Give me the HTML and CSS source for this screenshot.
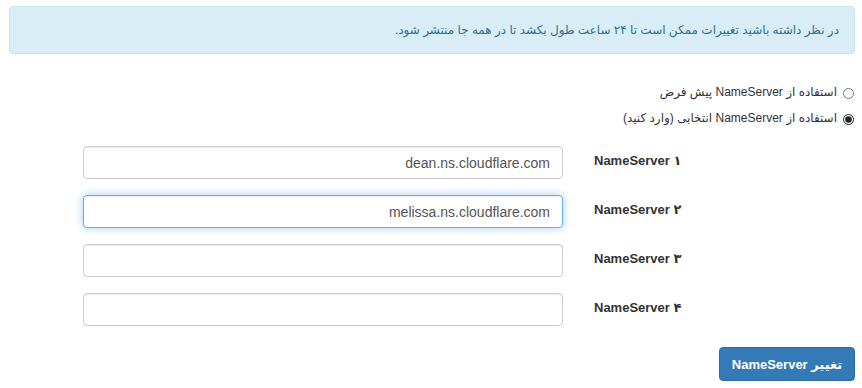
FILE: index.html
```html
<!DOCTYPE html>
<html lang="fa" dir="rtl">
  <head>
    <meta charset="UTF-8" />
    <title>تغییر NameServer</title>
    <link rel="stylesheet" href="styles.css">
  </head>
  <body>
    <div class="container">
      <div class="alert-info">در نظر داشته باشید تغییرات ممکن است تا ۲۴ ساعت طول بکشد تا در همه جا منتشر شود.</div>

      <form id="nsForm">
        <div class="radio-group">
          <label class="radio"><input type="radio" name="nsType" value="default" /> استفاده از NameServer پیش فرض</label>
          <label class="radio"><input type="radio" name="nsType" value="custom" checked /> استفاده از NameServer انتخابی (وارد کنید)</label>
        </div>

        <div class="ns-row">
          <label class="ns-label" for="ns1">NameServer ۱</label>
          <input type="text" id="ns1" class="ns-input" value="dean.ns.cloudflare.com" />
        </div>
        <div class="ns-row">
          <label class="ns-label" for="ns2">NameServer ۲</label>
          <input type="text" id="ns2" class="ns-input focused" value="melissa.ns.cloudflare.com" />
        </div>
        <div class="ns-row">
          <label class="ns-label" for="ns3">NameServer ۳</label>
          <input type="text" id="ns3" class="ns-input" value="" />
        </div>
        <div class="ns-row">
          <label class="ns-label" for="ns4">NameServer ۴</label>
          <input type="text" id="ns4" class="ns-input" value="" />
        </div>

        <div class="actions">
          <button type="submit" class="btn-primary">تغییر NameServer</button>
        </div>
      </form>
    </div>
  </body>
</html>
```

FILE: styles.css
```css
body {
  font-family: "Liberation Sans", "DejaVu Sans", sans-serif;
  font-size: 13px;
  color: #333;
  background: #fff;
  margin: 0;
}

.container {
  margin: 6px 7px 0 9px;
}

.alert-info {
  background: #d9edf7;
  border: 1px solid #c6e4f0;
  border-radius: 4px;
  color: #31708f;
  padding: 14px 15px;
  line-height: 18px;
  font-size: 12px;
}

.radio-group {
  margin-top: 25px;
  padding-right: 1px;
}

.radio {
  display: flex;
  align-items: center;
  gap: 6px;
  height: 26px;
  font-size: 12px;
}

.radio input {
  margin: 2px 0 0 0;
  width: 11px;
  height: 11px;
  accent-color: #222;
}

.ns-row {
  display: flex;
  align-items: flex-start;
  margin-top: 16px;
}

.radio-group + .ns-row {
  margin-top: 15px;
}

.ns-label {
  width: 261px;
  padding: 7px 0 0 14px;
  text-align: left;
  font-weight: bold;
  color: #333;
}

.ns-input {
  width: 480px;
  height: 33px;
  box-sizing: border-box;
  margin-right: 17px;
  padding: 6px 12px;
  border: 1px solid #ccc;
  border-radius: 4px;
  font-family: "Liberation Sans", sans-serif;
  font-size: 14px;
  color: #555;
  direction: rtl;
  box-shadow: inset 0 1px 1px rgba(0, 0, 0, 0.075);
}

.ns-input.focused,
.ns-input:focus {
  outline: none;
  border-color: #66afe9;
  box-shadow: inset 0 1px 1px rgba(0, 0, 0, 0.075), 0 0 8px rgba(102, 175, 233, 0.6);
}

.actions {
  margin-top: 21px;
}

.btn-primary {
  font-family: "Liberation Sans", "DejaVu Sans", sans-serif;
  font-size: 13px;
  font-weight: bold;
  color: #fff;
  background: #337ab7;
  border: 1px solid #2e6da4;
  border-radius: 4px;
  width: 136px;
  height: 34px;
  cursor: pointer;
}
```
